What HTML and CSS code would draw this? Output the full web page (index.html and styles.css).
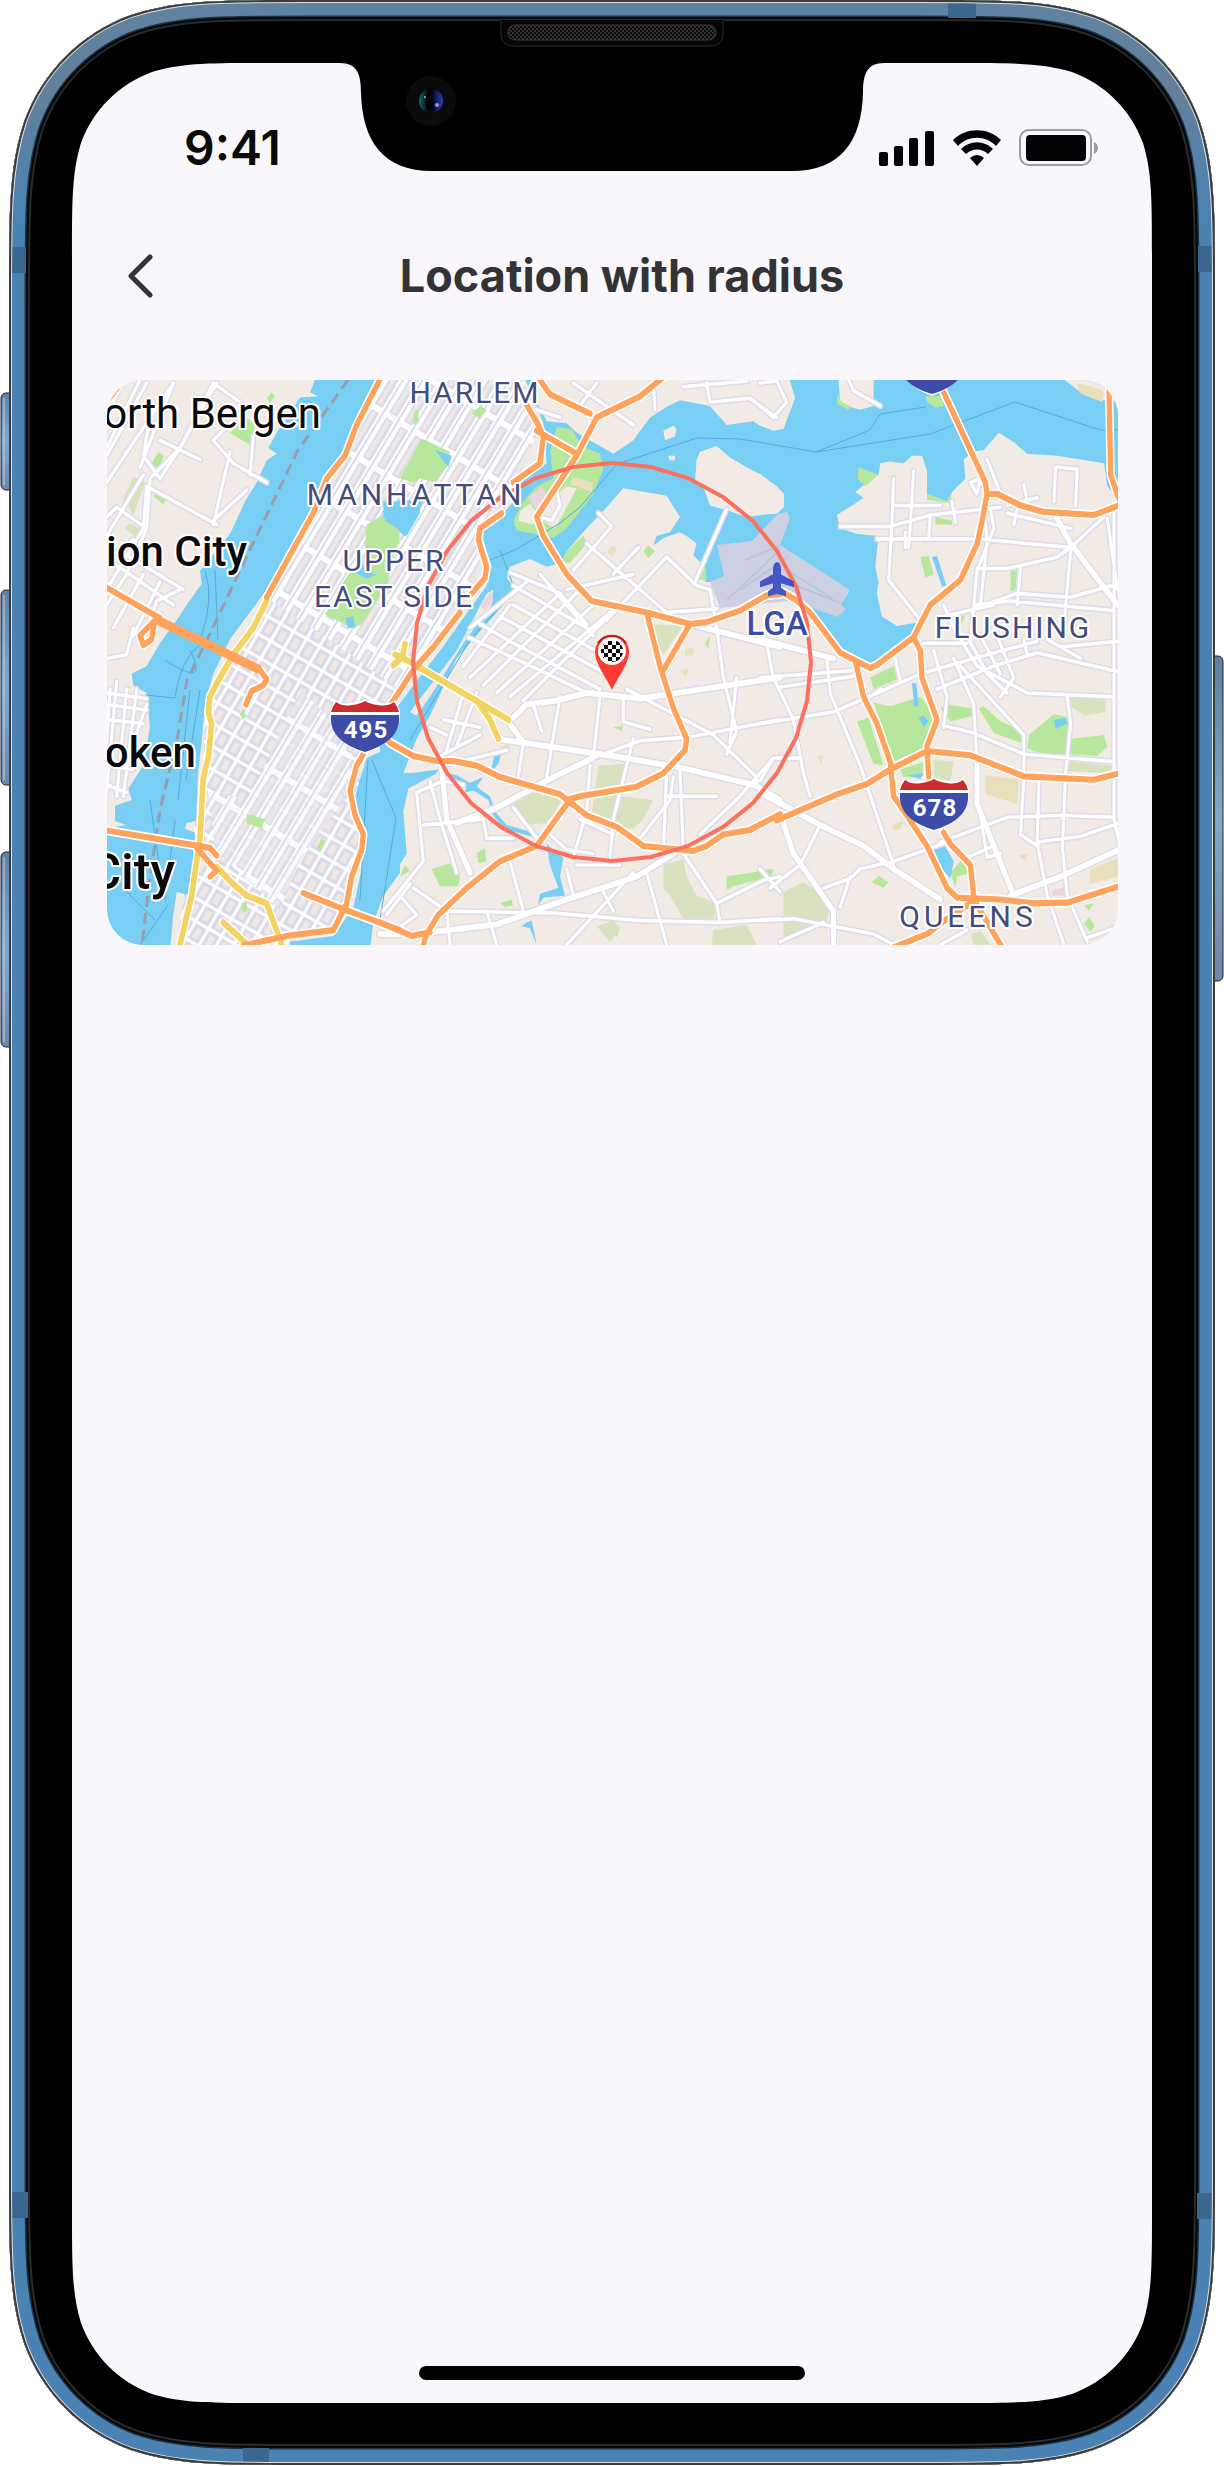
FILE: index.html
```
<!DOCTYPE html>
<html lang="en">
<head>
<meta charset="utf-8">
<meta name="viewport" content="width=device-width, initial-scale=1">
<title>Location with radius</title>
<link rel="stylesheet" href="styles.css">
</head>
<body>
<div class="phone">
  <svg class="frame" viewBox="0 0 1224 2466" aria-hidden="true">
    <defs>
      <path id="body" d="M306 0H918C1004 0 1047 0 1093 15C1143 33 1182 72 1200 122C1215 168 1215 211 1215 297V2168C1215 2254 1215 2297 1200 2343C1182 2393 1143 2432 1093 2450C1047 2465 1004 2465 918 2465H306C220 2465 177 2465 131 2450C81 2432 42 2393 24 2343C9 2297 9 2254 9 2168V297C9 211 9 168 24 122C42 72 81 33 131 15C177 0 220 0 306 0Z"/>
      <clipPath id="bodyClip"><use href="#body"/></clipPath>
      <linearGradient id="metal" x1="0" y1="0" x2="0" y2="1">
        <stop offset="0" stop-color="#5f83a3"/><stop offset=".035" stop-color="#64809b"/><stop offset=".09" stop-color="#4a82b4"/><stop offset="1" stop-color="#4a82b4"/>
      </linearGradient>
      <linearGradient id="key" x1="0" y1="0" x2="0" y2="1">
        <stop offset="0" stop-color="#5e7fa3"/><stop offset=".5" stop-color="#80a9d0"/><stop offset="1" stop-color="#6c86ab"/>
      </linearGradient>
      <pattern id="mesh" width="4" height="4" patternUnits="userSpaceOnUse">
        <rect width="4" height="4" fill="#0c0c0c"/><rect width="2" height="2" fill="#303030"/><rect x="2" y="2" width="2" height="2" fill="#303030"/>
      </pattern>
      <linearGradient id="lens"><stop offset="0" stop-color="#1d6a66"/><stop offset=".35" stop-color="#020a12"/><stop offset=".55" stop-color="#02061c"/><stop offset="1" stop-color="#2b3fb8"/></linearGradient>
    </defs>
    <g fill="url(#key)" stroke="#23252e" stroke-width="1">
      <rect x="1" y="393" width="14" height="97" rx="5"/>
      <rect x="1" y="590" width="14" height="195" rx="5"/>
      <rect x="1" y="852" width="14" height="195" rx="5"/>
      <rect x="1209" y="656" width="14" height="325" rx="5"/>
    </g>
    <g stroke="#c3d3e4" stroke-width="1"><path d="M4 398V485M4 595V780M4 857V1042"/></g>
    <g clip-path="url(#bodyClip)" fill="none">
      <use href="#body" fill="#000"/>
      <use href="#body" stroke="#2b2b2b" stroke-width="42"/>
      <use href="#body" stroke="#050708" stroke-width="38"/>
      <use href="#body" stroke="#1b3146" stroke-width="34"/>
      <use href="#body" stroke="url(#metal)" stroke-width="31"/>
      <path d="M9 247H26V273H9ZM1198 246H1215V272H1198ZM9 2192H28V2218H9ZM1197 2193H1215V2219H1197ZM948 0H976V18H948ZM243 2448H269V2465H243Z" fill="#3b678f"/>
      <use href="#body" stroke="#dfe3e6" stroke-width="6"/>
      <use href="#body" stroke="#3c3c3c" stroke-width="4"/>
    </g>
    <path fill="#f9f7fb" d="M265 63H340C357 63 361 74 361 92C362 142 384 171 432 171H792C840 171 862 142 863 92C863 74 867 63 884 63H959C1015 63 1043 63 1072 72C1105 84 1131 110 1143 143C1152 172 1152 200 1152 256V2210C1152 2266 1152 2294 1143 2323C1131 2356 1105 2382 1072 2394C1043 2403 1015 2403 959 2403H265C209 2403 181 2403 152 2394C119 2382 93 2356 81 2323C72 2294 72 2266 72 2210V256C72 200 72 172 81 143C93 110 119 84 152 72C181 63 209 63 265 63Z"/>
    <path d="M498 20C501 20 501 21 501 24V34C501 42 506 46 514 46H710C718 46 723 42 723 34V24C723 21 723 20 726 20" fill="#050505" stroke="#2b2b2b" stroke-width="1"/>
    <rect x="508" y="25" width="208" height="15" rx="7" fill="url(#mesh)" stroke="#3a3a3a"/>
    <circle cx="431" cy="101" r="25" fill="#0b0b0c"/>
    <circle cx="431" cy="101" r="12" fill="url(#lens)"/>
    <path d="M429 90Q436 101 429 112Q422 101 429 90Z" fill="#000"/>
    <circle cx="437" cy="105" r="2" fill="#a98fc4"/><circle cx="425" cy="97" r="1" fill="#6bd0c8"/>
  </svg>

  <main class="screen">
    <div class="status">
      <time class="clock">9:41</time>
      <svg class="signals" viewBox="878 128 222 40" role="img" aria-label="Signal, Wi-Fi and battery full">
        <g fill="#030305">
          <rect x="879" y="152" width="9" height="14" rx="2"/><rect x="894" y="146" width="9" height="20" rx="2"/><rect x="909" y="138" width="9" height="28" rx="2"/><rect x="925" y="131" width="9" height="35" rx="2"/>
          <path d="M953 140C966 127 988 127 1001 140L996 146C986 135 968 135 958 146ZM961 149C970 140 984 140 993 149L988 154C982 148 972 148 966 154ZM970 158Q977 152 984 158L977 166Z"/>
          <rect x="1026" y="135" width="60" height="26" rx="4"/>
        </g>
        <rect x="1020" y="130" width="71" height="35" rx="9" fill="none" stroke="#9d9ca0" stroke-width="2"/>
        <path d="M1094 142Q1098 144 1098 148Q1098 152 1094 154Z" fill="#9d9ca0"/>
      </svg>
    </div>
    <header class="bar">
      <button class="back" type="button" aria-label="Back">
        <svg viewBox="0 0 26 46" width="26" height="46"><path d="M22 4L3 23L22 42" fill="none" stroke="#333335" stroke-width="5" stroke-linecap="round" stroke-linejoin="round"/></svg>
      </button>
      <h1 class="title">Location with radius</h1>
    </header>
    <svg class="map" viewBox="107 380 1011 565" role="img" aria-label="Map of New York with a search radius">
      <defs>
        <pattern id="blocks" width="15" height="20" patternUnits="userSpaceOnUse" patternTransform="rotate(30)">
          <rect width="15" height="20" fill="#fff"/><rect x="3" y="3" width="9" height="14" fill="#efe8e4" stroke="#dad9e8" stroke-width="3"/>
        </pattern>
        <pattern id="avenues" width="17" height="52" patternUnits="userSpaceOnUse" patternTransform="rotate(31)">
          <rect width="17" height="52" fill="#fff"/><rect x="2" y="3" width="9" height="46" fill="#dcdbe9"/><rect x="4" y="5" width="4" height="42" fill="#eee8e6"/><path d="M14 0V52" stroke="#dcdbe9" stroke-width="2"/>
        </pattern>
        <g id="streetsWest" transform="translate(0 360) scale(.33333 .38265)">
          <path d="M320 150L370 52M320 320L520 60M320 230L420 52M540 230L640 60L720 110M440 60L320 250M480 210L600 260M450 150L430 250L480 310L540 230M420 280L520 60M320 410L350 385L440 440M440 330L650 430M440 330L430 440L320 600M320 460L430 300M540 230L450 310L440 440L380 560M650 60L540 230M740 120L640 210L700 270L800 320M690 240L640 430M760 200L750 300M640 420L740 340M320 520L400 470M360 500L550 600M340 530L520 640M540 600L470 630L450 680M430 560L340 700M480 580L400 720M380 560L320 640M320 780L380 770L400 700M320 870L440 885M320 900L440 915M320 940L430 950M350 840L320 1130M380 860L350 1140M410 860L370 1140M330 860L320 1000M320 1060L400 1070M440 900L400 1000M320 1110L380 1130"/>
        </g>
        <g id="streetsMid" transform="translate(380 360) scale(.33333 .38265)">
          <path d="M270 700L440 580M250 800L390 640M270 830L540 610M310 850L600 600M350 870L640 640M390 880L690 660M430 890L720 640M265 725L430 790L620 870M300 690L400 740L660 860M360 670L700 830M400 640L690 780M390 555L540 610L620 690M480 560L640 720M400 590L620 700M460 900L485 970M540 880L500 1090M430 1000L415 1090M660 880L640 1040M730 880L730 945L810 965M200 1020L250 870M230 1010L290 870M150 960L200 980M190 940L300 960M170 1040L300 980M380 1020L190 1060M760 990L700 1200L690 1300M860 1070L850 1290M900 1070L910 1290L1010 1420L1020 1470M1010 700L1030 830L1070 970L1040 1030M740 860L870 920L1000 980L1130 1090L1130 1110M1070 830L1050 1000M130 1215L310 1200L320 1250L400 1250M110 1130L130 1310L10 1440M150 1100L180 1200L230 1340M110 1130L190 1100L250 1110M390 1310L430 1440M320 1440L350 1528M400 1170L480 1260M630 1060L620 1180L580 1300M560 1330L580 1400M800 1340L860 1528M1010 1420L1150 1360L1200 1350M600 1200L700 1240M510 1240L560 1280L640 1290M620 480L860 660M560 600L760 560M700 560L775 490M655 400L695 435L580 550M680 680L860 515L950 590L990 600L1010 700M860 660L1010 650M1040 390L945 580M780 1250L870 1150L880 1090M860 1140L1010 1140M960 1240L1080 1140L1180 1040M670 1390L700 1440M100 1380L200 1440L210 1528M180 1440L520 1445L780 1465L1020 1470L1200 1460M560 1528L760 1340M20 1450L90 1370M60 1400L110 1450L30 1500M590 1320L720 1320M640 1040L780 995L930 985L1200 940M470 130L540 150M600 120L650 60M580 60L760 170M820 52L825 130M910 70L1100 55M980 60L990 110L1110 100L1140 120L1190 150M530 340L540 380L515 420L480 410"/>
        </g>
        <g id="streetsEast" transform="translate(760 360) scale(.334 .38265)">
          <path d="M0 60L50 55L80 110L40 150L0 120M265 52L280 80L360 120M0 830L300 810M60 855L290 825M0 950L220 920L480 820L680 770L830 735M200 780L210 870L300 1060L400 1320M20 740L40 830L100 940L130 1080L150 1140M180 1215L120 1320L30 1380M0 1100L40 1040L120 1040M190 1380L270 1355L300 1330L400 1310L560 1260M240 1430L270 1350M0 1465L100 1460L340 1500L400 1528M60 1520L190 1470M0 1330L60 1390M240 435L390 435L510 405L720 385M350 468L660 468L930 490M400 310L395 430L385 575L480 680M460 290L450 430L445 490M400 380L540 380M575 370L585 425M510 405L505 460M435 450V490M680 260L720 350M690 390L700 440L650 550L640 640L630 740M670 390L680 470L660 640M930 490L890 515L740 545L650 545M880 370L885 280L950 285L945 380M790 325L800 370M740 400L930 440M740 380L830 360M760 430L770 390M930 490L1030 410M1040 415L1070 600M780 545L770 640M930 500L910 690M640 640L750 630L1060 655M640 650L770 610L930 620L1070 585M550 670L700 640M490 740L620 740M530 860L700 800L830 765L1050 810L1075 815M860 730L960 780M900 750L1075 735M550 640L580 700M520 760L560 880L550 960M580 780L640 900L650 1060M600 730L650 800L800 870L1060 880M600 800L790 980L790 1090L780 1240L830 1270M620 720L680 820L740 870M660 720L720 820M700 700L760 830L720 880M550 955L640 975L790 1030L1060 1050M920 880L930 950L915 1080L905 1280M1060 400L1060 1200L1075 1260M835 1100L830 1260L860 1400L910 1528M540 1260L740 1195L900 1190L1060 1195M830 1260L960 1245L1075 1210M905 1270L920 1400L980 1520M660 1190L680 1300L720 1290M620 1300L700 1270M980 1510L1075 1480M400 760L420 840M630 320L660 310L650 350L630 320M790 730L800 770M540 1528L620 1490M330 880L360 860"/>
        </g>
        <g id="mainStreets">
          <path transform="translate(380 360) scale(.33333 .38265)" d="M400 935L440 900L530 890L620 870L780 885L930 865L1200 830M350 990L430 1000L700 1035L900 1065L1120 1110L1200 1150M380 940L430 1000M230 1210L350 1170L520 1090L640 1040M185 1060L200 1200L270 1340M0 1500L110 1500L350 1475L560 1410L770 1350L900 1280M930 690L1200 750"/>
          <path transform="translate(760 360) scale(.334 .38265)" d="M0 730L220 780M0 1130L180 1215L310 1270L400 1330L540 1410M70 1210L100 1290L220 1440L220 1528M880 400L930 480L1070 640M650 1060L650 1160L760 1400M750 1400L900 1350L1075 1280"/>
        </g>
        <g id="highways">
          <path transform="translate(0 360) scale(.33333 .38265)" d="M1146 40L1070 170L1035 250L980 310L940 400L870 510L800 620M310 590L450 660L480 675M738 900L755 865L790 850L800 835L780 810M465 680L420 720L430 745L455 730L462 690M310 1228L460 1250L630 1275L650 1295M590 1275L650 1335L630 1350M1090 1030L1070 1060L1050 1125L1065 1190L1090 1240L1085 1280L1055 1350L1040 1420L1000 1490L860 1505L730 1530M910 1393L1030 1435L1200 1490M310 120L355 70"/>
          <path transform="translate(380 360) scale(.33333 .38265)" d="M470 40L510 90L630 140M850 45L780 95L650 150L590 250L470 410L490 460L560 560L635 630L800 660L930 690L980 685L1080 655L1160 615L1200 612M435 110L475 170L490 200L480 270L400 320M365 400L300 440L295 470L320 540L315 570L270 615M240 660L160 750L100 810L40 890L10 930M470 185L590 245M800 660L840 800L880 910L920 990L915 1020L850 1080L770 1115L600 1140L560 1150M930 690L850 810M0 970L30 1000L100 1035L170 1048L220 1048L290 1060L360 1090L540 1135L620 1190L710 1220L790 1270L940 1283L980 1270L1030 1240L1110 1228L1200 1187M565 1155L470 1270L360 1310L260 1380L175 1450L140 1500L126 1540M0 1470L95 1505L150 1495"/>
          <path transform="translate(760 360) scale(.334 .38265)" d="M40 609L70 608L105 625L150 660L240 765L330 805L350 797L460 725L480 690L510 640L600 575L650 480L665 420L680 350L675 320L550 85M680 350L710 350L780 380L850 397L1000 405L1080 378M1045 80L1050 300L1075 365M285 785L310 880L350 950L390 1050L400 1140L440 1190L500 1270L560 1380L590 1405L720 1410L820 1420L920 1418L1080 1374M460 725L480 760L485 830L530 940L500 1010L505 1090M50 1203L230 1135L320 1108L390 1070L500 1022L630 1033L790 1088L1000 1097L1080 1079M550 1235L570 1265L630 1320L640 1405M400 1535L500 1500L560 1460L630 1420M640 1410L725 1535"/>
        </g>
        <g id="parkways">
          <path transform="translate(0 360) scale(.33333 .38265)" d="M800 630L760 700L700 770L650 845L630 880L625 920L635 950L625 1040L610 1090L600 1250L575 1400L538 1535M650 1325L700 1370L740 1400L800 1420L848 1535M670 1470L745 1530"/>
          <path transform="translate(380 360) scale(.33333 .38265)" d="M75 742L68 775L40 798M45 770L68 778L385 940M290 890L330 940L355 990"/>
        </g>
      </defs>
      <rect x="107" y="380" width="1011" height="565" fill="#f2ebe5"/>

      <g transform="translate(0 360) scale(.33333 .38265)">
        <path fill="#b7e79d" d="M455 270L475 240L492 250L475 285ZM460 355L475 345L500 360L490 378ZM690 190L740 150L765 170L755 225ZM800 100L815 85L825 95L810 112Z"/>
        <path fill="#d9e2be" d="M370 360L400 305L435 320L400 405ZM375 440L390 425L425 445L405 462Z"/>
      </g>
      <path d="M376 380H523L541 425L500 520L486 560L440 640L385 715L360 760L364 835L350 915L285 945H176L190 860L203 760L206 700L266 596L315 500L350 440Z" fill="url(#blocks)"/>
      <path d="M376 380H523L541 425L500 520L486 560L440 640L400 690L330 640L270 600L315 500L350 440Z" fill="url(#avenues)"/>
      <path d="M208 790L248 800L300 690L355 740L345 800L300 860L280 910L215 850Z" fill="url(#avenues)" opacity=".8"/>
      <g transform="translate(0 360) scale(.33333 .38265)" fill="#b7e79d">
        <path d="M1100 430L1160 400L1200 450L1160 590L1085 690L1060 702L975 665L1030 580L1050 555L1090 540ZM740 1185L795 1200L785 1225L740 1210ZM950 1275L965 1250L975 1260L960 1285ZM720 925L730 915L740 930L728 940ZM725 1420L740 1415L742 1440L728 1445Z"/>
        <path fill="#78cff3" d="M1150 410L1150 370L1260 370L1260 400L1220 460ZM1035 675L1060 670L1065 700L1045 700ZM1065 555L1085 520L1095 555L1130 560L1100 572Z"/>
      </g>
      <g transform="translate(380 360) scale(.33333 .38265)" fill="#b7e79d">
        <path d="M60 310L125 205L210 240L200 280L165 320L120 310L100 320ZM275 140L300 120L320 130L300 155ZM100 140L115 125L115 160L100 170ZM0 420L50 440L60 480L0 500Z"/>
        <path fill="#78cff3" d="M165 235L215 250L205 280ZM15 390L60 365L130 370L75 462L50 440L15 420Z"/>
      </g>

      <g fill="#78cff3">
        <path transform="translate(0 360) scale(.33333 .38265)" d="M950 40L930 85L955 95L900 98L870 140L830 190L805 230L830 245L800 262L770 320L735 370L690 455L600 550L605 585L560 640L530 680L480 740L440 800L395 820L400 850L440 870L450 960L430 1060L385 1120L395 1150L345 1165L345 1205L378 1215L310 1225V1540H510L520 1450L530 1390L575 1400L585 1235L555 1225L560 1210L588 1205L595 1070L605 1000L615 900L640 820L690 730L800 600L870 500L940 380L1010 280L1060 180L1135 40ZM1200 1000L1100 1040L1065 1140L1075 1180L1100 1230L1085 1330L1060 1430L1000 1505L870 1520V1540H1110L1120 1470L1150 1400L1200 1340Z"/>
        <path transform="translate(380 360) scale(.33333 .38265)" d="M430 40L470 120L490 165L500 270L430 310L400 370L350 420L310 440L310 470L335 540L320 590L270 650L180 760L100 850L40 920L0 960V1400L30 1360L80 1290L70 1180L85 1120L170 1080L175 1070L110 1078L70 1080L110 990L150 930L230 780L310 700L350 660L410 600L380 570L390 540L450 520L500 540L545 530L560 500L620 440L680 385L730 335L860 355L900 410L870 450L830 460L820 485L850 465L900 450L920 460L950 480L940 510L975 540V580L1055 580V620L1145 600V175L1120 160L1040 170L990 120L900 105L865 120L810 150L760 210L700 245L640 215L590 190L560 165L500 160L465 100L450 40Z"/>
        <path transform="translate(760 360) scale(.334 .38265)" d="M0 172L40 185L70 180L105 100L85 40H1080V370L1040 330L1030 270L890 250L800 245L760 215L715 190L670 235L640 240L610 260L615 310L575 345L560 370L500 350V290L485 250H455L430 270L390 265L360 270L355 300L320 320L285 345L310 360L285 375L230 405L240 440L290 455L355 460L345 540L355 580L350 610L365 670L410 695L480 685L460 715L400 750L330 800L250 765L200 720L150 650L0 600Z"/>
      </g>
      <g transform="translate(380 360) scale(.33333 .38265)" fill="#78cff3">
        <path d="M180 1075L230 1085L270 1105L310 1090L290 1115L330 1140L345 1180L380 1215L480 1240L465 1248L370 1225L340 1190L325 1150L280 1125L255 1130L260 1110ZM345 1025L365 1025L355 1055L340 1070L335 1065ZM500 1265L550 1300L540 1350L555 1400L490 1405L475 1425L480 1395L535 1380L510 1320ZM440 1470L455 1465L470 1528L450 1485L425 1480Z"/>
      </g>

      <g transform="translate(380 360) scale(.33333 .38265)">
        <path fill="#f2ebe5" d="M960 240L1010 225L1050 255L1120 290L1145 300V405L1100 410L1050 395L990 380L970 330L945 320L950 260ZM850 185L880 172L890 180L885 200L855 210ZM865 250L885 250L885 262L868 262ZM90 920L230 760L320 610L340 600L335 640L250 740L150 880L110 930Z"/>
        <path fill="#b7e79d" d="M530 175L575 180L605 225L660 245L670 285L640 350L560 440L520 465L410 445L400 420L430 370L470 330L520 310L510 240ZM545 530L560 500L610 458L620 480L570 530ZM790 500L805 485L825 500L805 518ZM960 560L975 530L980 575L955 575ZM290 1290L315 1275L320 1310L295 1315ZM155 1330L210 1315L240 1350L235 1375L180 1375ZM700 960L730 955L725 970ZM1040 1350L1180 1330L1170 1350L1060 1375L1040 1385ZM360 1420L395 1410L400 1425L375 1430ZM700 1490L720 1480L710 1510ZM975 740L990 720L985 755ZM75 1320L90 1335L60 1350Z"/>
        <path fill="#d9e2be" d="M400 1160L460 1130L550 1145L500 1210L440 1215ZM655 1060L750 1055L720 1140L820 1150L790 1200L760 1225L630 1220ZM805 690L910 695L850 770ZM850 1320L910 1305L920 1350L950 1400L1010 1420L1000 1460L910 1460L870 1400L850 1380ZM650 1480L700 1465L720 1485L690 1520ZM1000 1490L1100 1475L1130 1528L995 1528Z"/>
        <path fill="#e8dfbb" d="M580 305L640 320L635 345L570 325ZM680 500L700 485L710 495L695 515ZM915 755L940 750L940 770L915 775ZM900 810L925 808L920 828ZM360 1010L390 1005L385 1025Z"/>
        <path fill="#ecd4de" d="M445 360L485 330L500 350L470 390ZM300 640L335 605L340 630L315 655Z"/>
        <path fill="#f2ebe5" d="M560 330L590 335L545 410L525 440L470 410L530 350ZM420 395L450 375L470 400L460 430L415 420Z"/>
      </g>
      <g transform="translate(760 360) scale(.334 .38265)">
        <path fill="#f2ebe5" d="M0 297L50 330L72 350L72 385L50 402L0 405ZM235 52H340V120L300 130L240 115ZM895 40H1080V110L1030 105L960 85Z"/>
        <path fill="#b7e79d" d="M230 90L245 110L270 120L265 130L232 115ZM495 95H545L550 120L525 125L500 110ZM295 280L355 300L315 330L292 310ZM525 410L575 420V430H525ZM480 515L505 512L520 560L495 570ZM750 550H770L765 600L750 605ZM330 830L400 800L410 835L340 860ZM340 895L390 905L480 880L530 930L500 1010L400 1050L350 920ZM290 945L325 935L370 1060L340 1055ZM420 1070L490 1050L485 1090L430 1090ZM540 910L560 900L630 910L640 930L570 945ZM655 910L670 905L720 945L790 970L780 1000L700 975ZM805 980L880 925L930 935L915 1030L860 1035L800 1015ZM930 990L1030 980L1040 1010L1010 1035L930 1030ZM570 1340L610 1300L630 1340L590 1350L585 1380ZM335 1365L355 1348L385 1365L370 1380ZM20 1330L40 1335L30 1355ZM970 1475L985 1455L1002 1480L990 1495ZM970 1425L1000 1420L985 1440ZM600 670L615 668L600 695ZM500 350L560 370L575 345L570 375L500 365Z"/>
        <path fill="#d9e2be" d="M520 1045L580 1050L570 1100L520 1090ZM930 880L1035 885L1035 920L970 930L930 905ZM930 1050L1050 1060L1050 1080L920 1075ZM70 1390L130 1365L190 1400L210 1440L190 1480L70 1510ZM630 1500L660 1490L690 1528H640Z"/>
        <path fill="#e8dfbb" d="M675 1085L775 1095L770 1160L675 1135ZM950 60L1030 80L1025 110L960 88ZM990 1330L1075 1300V1350L985 1370ZM395 1215L430 1205L420 1225L400 1228ZM170 1035L188 1032L185 1055ZM775 1295L800 1290L795 1310Z"/>
        <path fill="#ecd4de" d="M875 1385L910 1378L920 1400L875 1400Z"/>
        <path fill="#78cff3" d="M880 940L915 935L920 950L885 965ZM520 1280L550 1265L580 1310L570 1355L545 1330ZM440 1085L490 1080L480 1095ZM515 515L530 512L558 590L545 592ZM455 845L468 845L475 905L462 905ZM475 935L490 930L505 945L490 960Z"/>
      </g>

      <path d="M760 560L725 580L717 545L752 541L778 514L787 512L790 518L780 545L850 590L841 605L846 609L838 617L812 608L800 600L720 608L710 582Z" fill="#cdd0e3"/>
      <path d="M727 600L780 550M740 590L788 557M762 572L840 603M786 570L832 598M745 560L780 546" stroke="#bfc3da" stroke-width="2" fill="none"/>

      <g fill="none" stroke="#55a9e0" stroke-width="1">
        <path d="M1118 430L1100 430L1015 402L930 434L816 452L740 439L697 438L617 464L580 507L560 523L515 550L490 560M816 452L870 430L880 414L926 407M205 570Q215 600 200 640M165 660Q210 690 190 650M145 695L175 698Q180 660 200 645M200 690L186 780M190 690L178 800M215 570L218 640M372 760L396 818L380 920M368 760L360 900M500 550L515 590L470 640L410 740M125 890L155 920M140 945L168 905M150 800L160 870M175 820L165 900"/>
      </g>
      <path d="M348 380L298 450L245 560L207 640L187 680L178 735L160 810L149 885L142 945" fill="none" stroke="#9a9cae" stroke-width="3" stroke-dasharray="11 6"/>

      <g class="roads casing minor"><use href="#streetsWest"/><use href="#streetsMid"/><use href="#streetsEast"/></g>
      <g class="roads casing major"><use href="#mainStreets"/></g>
      <g class="roads core minor"><use href="#streetsWest"/><use href="#streetsMid"/><use href="#streetsEast"/></g>
      <g class="roads core major"><use href="#mainStreets"/></g>
      <g class="roads halo"><use href="#parkways"/><use href="#highways"/></g>
      <g class="roads parkway"><use href="#parkways"/></g>
      <g class="roads highway"><use href="#highways"/></g>
      <path d="M157 620L213 647L260 670" fill="none" stroke="#ffa25c" stroke-width="9"/>

      <path d="M612 463L651 467L688 478L723 497L753 521L777 551L796 586L807 623L811 662L807 701L796 738L777 773L753 803L723 827L688 846L651 857L612 861L573 857L536 846L501 827L471 803L447 773L428 738L417 701L413 662L417 623L428 586L447 551L471 521L501 497L536 478L573 467Z" fill="none" stroke="#fa725e" stroke-width="4"/>

      <g class="city">
        <text x="321" y="428">North Bergen</text>
        <text class="mid" x="247" y="566">Union City</text>
        <text class="mid" x="196" y="767">Hoboken</text>
        <text class="large" x="175" y="889">Jersey City</text>
      </g>
      <g class="district">
        <text x="475" y="403">HARLEM</text>
        <text class="borough" x="416" y="505">MANHATTAN</text>
        <text x="394" y="571">UPPER</text>
        <text x="394" y="607">EAST SIDE</text>
        <text x="1013" y="638">FLUSHING</text>
        <text class="borough" x="968" y="927">QUEENS</text>
      </g>
      <text class="airport" x="777" y="635">LGA</text>
      <path d="M777 563Q780 564 780 570V575L793 582V586L780 582V588L785 592V595L777 593L769 595V592L774 588V582L761 586V582L774 575V570Q774 564 777 563Z" fill="#4656c4" stroke="#4656c4" stroke-width="2"/>

      <defs>
        <g id="shield">
          <path d="M-30 -1Q-24 4 -14 2Q-5 1 0 -2Q5 1 14 2Q24 4 30 -1L35 10Q38 38 0 53Q-38 38 -35 10Z" fill="#fff"/>
          <path d="M-29 1Q-22 6 -13 4Q-5 3 0 0Q5 3 13 4Q22 6 29 1Q33 6 34 11H-34Q-33 6 -29 1Z" fill="#cb2b2e"/>
          <path d="M-34 14H34C36 34 20 45 0 51C-20 45 -36 34 -34 14Z" fill="#3c4ca8"/>
        </g>
      </defs>
      <use href="#shield" x="365" y="701"/><text class="route" x="366" y="738">495</text>
      <use href="#shield" x="934" y="779"/><text class="route" x="935" y="816">678</text>
      <use href="#shield" x="932" y="343"/>

      <path d="M612 690C608 680 595 664 595 652A17 17 0 0 1 629 652C629 664 616 680 612 690Z" fill="#fe3b30"/>
      <path d="M598 643A17 17 0 0 1 626 643" fill="none" stroke="#c41c14" stroke-width="2"/>
      <circle cx="612" cy="651" r="14" fill="#fff"/>
      <clipPath id="flag"><circle cx="612" cy="651" r="11"/></clipPath>
      <g clip-path="url(#flag)"><path d="M600 641h4v4h-4zm8 0h4v4h-4zm8 0h4v4h-4zm-12 4h4v4h-4zm8 0h4v4h-4zm8 0h4v4h-4zm-20 4h4v4h-4zm8 0h4v4h-4zm8 0h4v4h-4zm-12 4h4v4h-4zm8 0h4v4h-4zm8 0h4v4h-4zm-20 4h4v4h-4zm8 0h4v4h-4zm8 0h4v4h-4zm-12 4h4v4h-4zm8 0h4v4h-4z" fill="#0a0a0a"/></g>
    </svg>
    <div class="home"></div>
  </main>
</div>
</body>
</html>
```
FILE: styles.css
```
* { box-sizing: border-box; }

body {
  margin: 0;
  background: #fff;
  font-family: Inter, "Liberation Sans", sans-serif;
}

.phone { display: grid; }

.frame,
.screen { grid-area: 1 / 1; }

.frame {
  display: block;
  width: 100%;
  height: auto;
}

.screen {
  display: flex;
  flex-direction: column;
  margin: 63px 72px;
}

.status {
  display: flex;
  align-items: center;
  justify-content: space-between;
  height: 150px;
  padding: 20px 52px 0 112px;
  color: #0b0b0c;
}

.clock {
  font-size: 48px;
  font-weight: 600;
  line-height: 56px;
}

.signals {
  width: 222px;
  height: 40px;
}

.bar {
  display: grid;
  grid-template-columns: 64px 1fr 64px;
  align-items: center;
  height: 126px;
  padding: 0 24px 0 44px;
}

.back {
  display: flex;
  align-items: center;
  height: 64px;
  padding: 0 12px;
  border: 0;
  background: none;
}

.title {
  margin: 0;
  color: #333335;
  font-size: 45px;
  font-weight: 700;
  line-height: 56px;
  text-align: center;
}

.map {
  display: block;
  margin: 41px 34px 0 35px;
  border-radius: 36px;
  font-family: Roboto, "Open Sans", sans-serif;
}

/* Road widths are in the finer units of the scaled road groups. */
.roads {
  fill: none;
  stroke-linecap: round;
  stroke-linejoin: round;
}
.casing { stroke: #dcdbe9; }
.casing.minor { stroke-width: 17px; }
.casing.major { stroke-width: 22px; }
.core { stroke: #fff; }
.core.minor { stroke-width: 9px; }
.core.major { stroke-width: 15px; }
.halo { stroke: #fff; stroke-width: 25px; }
.parkway { stroke: #f3d463; stroke-width: 17px; }
.highway { stroke: #ffa25c; stroke-width: 16px; }

.map text {
  stroke: #fff;
  stroke-width: 4px;
  stroke-linejoin: round;
  paint-order: stroke;
}

.city text {
  fill: #0a0a0c;
  font-size: 42px;
  text-anchor: end;
}
.city .mid { font-weight: 500; }
.city .large { font-size: 50px; font-weight: 500; }

.district text {
  fill: #444b7d;
  font-size: 30px;
  letter-spacing: 2px;
  text-anchor: middle;
}
.district .borough { letter-spacing: 4px; }

.map .airport {
  fill: #3b4ba8;
  font-size: 33px;
  font-weight: 500;
  text-anchor: middle;
}

.map .route {
  fill: #fff;
  stroke: none;
  font-size: 24px;
  font-weight: 700;
  letter-spacing: 1px;
  text-anchor: middle;
}

.home {
  align-self: center;
  width: 386px;
  height: 14px;
  margin: auto 0 23px;
  border-radius: 7px;
  background: #000;
}
```
